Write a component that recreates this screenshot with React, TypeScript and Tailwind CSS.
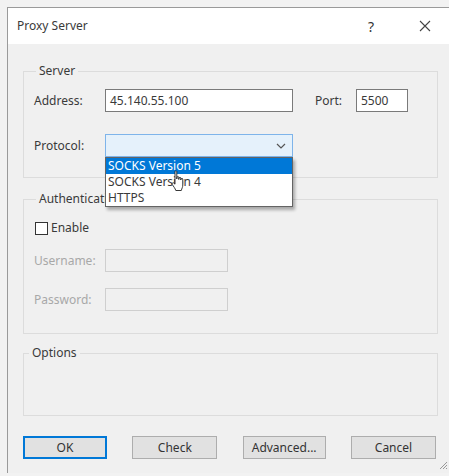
import React from "react";

const font = { fontFamily: '"Noto Sans", "Open Sans", Arial, sans-serif' };

function HandCursor() {
  return (
    <svg width="16" height="22" viewBox="0 0 16 22" className="absolute left-[65px] top-[12px] pointer-events-none">
      <path
        d="M4 1.5 C4 0.7 5.8 0.7 5.8 1.5 L5.8 9 L6 7.2 C6 6.4 7.8 6.4 7.8 7.2 L7.8 9.5 L8 8 C8 7.2 9.8 7.2 9.8 8 L9.8 10 L10 9 C10 8.2 11.8 8.2 11.8 9 L11.8 15 C11.8 17 10.8 18.5 10.3 20.5 L4.8 20.5 C4.3 18.5 2.5 16.5 1.3 14.5 C0.6 13.3 1.8 12.2 2.8 13 L4 14.2 Z"
        fill="#ffffff"
        stroke="#222"
        strokeWidth="0.9"
        strokeLinejoin="round"
      />
    </svg>
  );
}

export default function App() {
  return (
    <div className="w-[449px] h-[476px] bg-[#f2f2f2] overflow-hidden text-[12px] text-[#3a3a3a]" style={font}>
      <div className="ml-[7px] mt-[7px] h-[466px] border-l border-t border-[#9a9a9a] bg-[#f0f0f0] flex flex-col relative">
        {/* Title bar */}
        <div className="h-[36px] bg-white flex items-center pl-[9px] pr-[18px] shrink-0">
          <span className="text-[12px] text-[#3a3a3a]">Proxy Server</span>
          <span className="ml-auto text-[14px] text-[#333] mr-[45px]">?</span>
          <svg width="12" height="12" viewBox="0 0 12 12">
            <path d="M1 1 L11 11 M11 1 L1 11" stroke="#444" strokeWidth="1.1" />
          </svg>
        </div>

        <div className="flex flex-col pl-[15px] pr-[11px] pt-[19px]">
          {/* Server */}
          <fieldset className="border border-[#dcdcdc] px-[10px] pt-[10px] pb-[20px]">
            <legend className="px-[3px] ml-[2px] leading-[16px]">Server</legend>
            <div className="flex items-center h-[23px]">
              <span className="w-[71px]">Address:</span>
              <div className="w-[188px] h-[23px] border border-[#7a7a7a] bg-white flex items-center px-[4px]">45.140.55.100</div>
              <span className="ml-[22px] w-[41px]">Port:</span>
              <div className="w-[52px] h-[23px] border border-[#7a7a7a] bg-white flex items-center px-[4px]">5500</div>
            </div>
            <div className="flex items-center h-[23px] mt-[22px]">
              <span className="w-[71px]">Protocol:</span>
              <div className="relative w-[188px] h-[23px]">
                <div className="w-full h-full border border-[#7eb4ea] bg-[#e5f1fb] flex items-center justify-end pr-[6px]">
                  <svg width="10" height="6" viewBox="0 0 10 6">
                    <path d="M1 1 L5 5 L9 1" fill="none" stroke="#555" strokeWidth="1.2" />
                  </svg>
                </div>
                <div className="absolute left-0 top-[23px] w-[188px] h-[50px] bg-white border border-[#646464] shadow-[2px_3px_3px_rgba(0,0,0,0.3)] z-10 leading-[16px]">
                  <div className="bg-[#0078d7] text-white px-[2px] h-[16px]">SOCKS Version 5</div>
                  <div className="px-[2px] h-[16px]">SOCKS Version 4</div>
                  <div className="px-[2px] h-[16px]">HTTPS</div>
                  <HandCursor />
                </div>
              </div>
            </div>
          </fieldset>

          {/* Authentication */}
          <fieldset className="border border-[#dcdcdc] px-[10px] pt-[13px] pb-[22px] mt-[13px]">
            <legend className="px-[3px] ml-[2px] leading-[16px]">Authentication</legend>
            <div className="flex items-center h-[16px] ml-[1px]">
              <div className="w-[13px] h-[13px] border border-[#333] bg-white mr-[3px]" />
              <span>Enable</span>
            </div>
            <div className="flex items-center h-[23px] mt-[13px] text-[#a8a8a8]">
              <span className="w-[71px]">Username:</span>
              <div className="w-[123px] h-[23px] border border-[#cfcfcf] bg-[#f0f0f0]" />
            </div>
            <div className="flex items-center h-[23px] mt-[16px] text-[#a8a8a8]">
              <span className="w-[71px]">Password:</span>
              <div className="w-[123px] h-[23px] border border-[#cfcfcf] bg-[#f0f0f0]" />
            </div>
          </fieldset>

          {/* Options */}
          <fieldset className="border border-[#dcdcdc] h-[71px] mt-[11px]">
            <legend className="px-[3px] ml-[5px] leading-[16px]">Options</legend>
          </fieldset>

          {/* Buttons */}
          <div className="flex justify-between mt-[20px] pr-[2px]">
            <button className="w-[84px] h-[23px] bg-[#e1e1e1] border-2 border-[#0078d7] text-[#333]">OK</button>
            <button className="w-[85px] h-[23px] bg-[#e1e1e1] border border-[#adadad] text-[#333]">Check</button>
            <button className="w-[83px] h-[23px] bg-[#e1e1e1] border border-[#adadad] text-[#333]">Advanced...</button>
            <button className="w-[85px] h-[23px] bg-[#e1e1e1] border border-[#adadad] text-[#333]">Cancel</button>
          </div>
        </div>

        <svg width="10" height="10" viewBox="0 0 10 10" className="absolute right-[1px] bottom-[3px]">
          <path d="M9 2 L2 9 M9 5 L5 9 M9 8 L8 9" stroke="#999" strokeWidth="1" />
        </svg>
      </div>
    </div>
  );
}
